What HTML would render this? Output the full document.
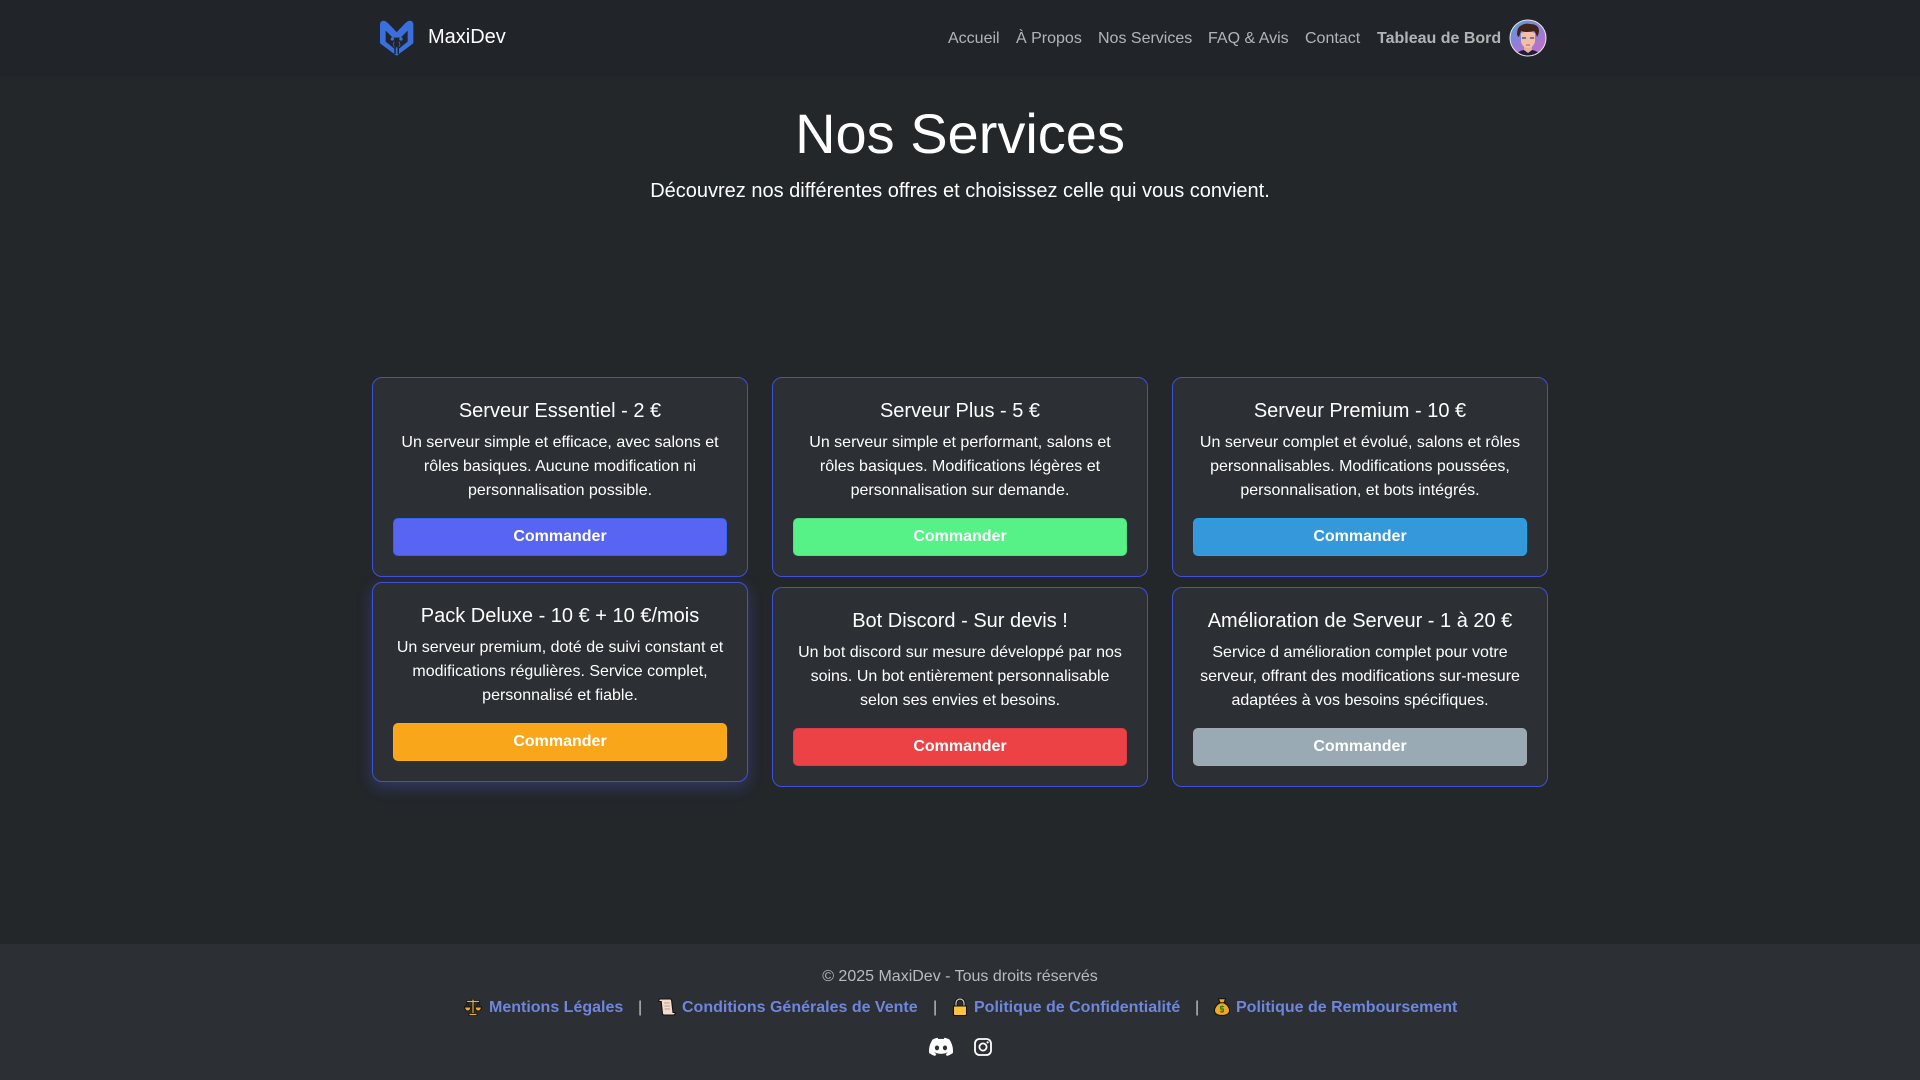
<!DOCTYPE html>
<html lang="fr"><head><meta charset="utf-8"><title>Nos Services - MaxiDev</title>
<style>
*{box-sizing:border-box}
html,body{margin:0;padding:0;width:1920px;height:1080px;overflow:hidden;background:#23272a;font-family:"Liberation Sans",sans-serif;color:#fff}
.abs{position:absolute;white-space:nowrap}
nav{position:absolute;left:0;top:0;width:1920px;height:76px;background:#212529}
nav a{position:absolute;top:27px;font-size:16px;line-height:24px;color:rgba(255,255,255,.65);white-space:nowrap}
h1{position:absolute;left:0;width:1920px;top:100px;margin:0;text-align:center;font-size:56px;line-height:67px;font-weight:400}
.sub{position:absolute;left:0;width:1920px;top:179px;margin:0;text-align:center;font-size:20px;line-height:24px}
.card{position:absolute;width:376px;height:200px;background:#2c2f33;border:1px solid #4050d8;border-radius:10px;padding:20px;text-align:center}
.card h5{margin:1px 0 8px;font-size:20px;line-height:24px;font-weight:400}
.card p{margin:0 0 15px;font-size:16px;line-height:24px}
.btn{display:block;height:38px;border-radius:5px;border:1px solid;font-weight:700;font-size:16px;line-height:36px;text-align:center;color:#fff}
.hov{box-shadow:0 5px 15px rgba(88,101,242,.3)}
footer{position:absolute;left:0;top:944px;width:1920px;height:136px;background:#2c2f33}
footer a{font-weight:700;color:#6e86dd}
.f{position:absolute;font-size:16px;line-height:24px;white-space:nowrap}
.sep{color:#c8c8c8}
</style></head><body>
<nav>
<svg class="abs" style="left:370px;top:10px" width="60" height="50" viewBox="0 0 180 150"><path d="M34 44q0-10 10-7q4 2 8 6L80 72L108 43q4-4 8-6q10-3 10 7V98L80 132L34 98Z" fill="#3a6fdc" stroke="#3a6fdc" stroke-width="8" stroke-linejoin="round"/><path d="M47 62L68 83H92L113 62V95L87 116V132H73V116L47 95Z" fill="#212529"/><circle cx="67" cy="87" r="5" fill="#3a6fdc"/><circle cx="93" cy="87" r="5" fill="#3a6fdc"/><path d="M80 112V136" stroke="#3a6fdc" stroke-width="5"/><path d="M74 96q-3 0-3 4t-2 3q2 0 2 3t3 4M86 96q3 0 3 4t2 3q-2 0-2 3t-3 4" fill="none" stroke="#3a6fdc" stroke-width="2"/></svg>
<div class="abs" style="left:428px;top:25px;font-size:20px;line-height:24px;color:#fff">MaxiDev</div>
<a style="left:948px">Accueil</a>
<a style="left:1016px">À Propos</a>
<a style="left:1098px">Nos Services</a>
<a style="left:1208px">FAQ &amp; Avis</a>
<a style="left:1305px">Contact</a>
<a style="left:1377px;font-weight:700">Tableau de Bord</a>
<svg class="abs" style="left:1509px;top:19px" width="38" height="38" viewBox="0 0 38 38"><defs><linearGradient id="g" x1="0" y1="0" x2=".6" y2="1"><stop offset="0" stop-color="#4f9fd8"/><stop offset=".55" stop-color="#8f7fd8"/><stop offset="1" stop-color="#c070c8"/></linearGradient><clipPath id="c"><circle cx="19" cy="19" r="17.5"/></clipPath></defs><circle cx="19" cy="19" r="18" fill="url(#g)" stroke="#e8e8e8" stroke-width="1"/><g clip-path="url(#c)"><path d="M6 38q2-6 9-7h8q7 1 9 7Z" fill="#1f1b3a"/><path d="M15 26h8v5l-4 3-4-3Z" fill="#eab09a"/><path d="M12 14q7-3 14 0v9q-2 6-7 6t-7-6Z" fill="#f2c0a8"/><path d="M8 15q0-7 5-9 4-2 8-1 8 0 9 6 0 4-2 7-1-4-3-6-7 2-13 0-1 3-2 6-2-1-2-3Z" fill="#3e2418"/><path d="M13 19h4M21 19h4" stroke="#557" stroke-width="1.6"/><path d="M17 26h4" stroke="#b56" stroke-width="1"/></g></svg>
</nav>
<h1>Nos Services</h1>
<p class="sub">Découvrez nos différentes offres et choisissez celle qui vous convient.</p>

<div class="card" style="left:372px;top:377px"><h5>Serveur Essentiel - 2 €</h5><p>Un serveur simple et efficace, avec salons et rôles basiques. Aucune modification ni personnalisation possible.</p><a class="btn" style="background:#5865f2;border-color:#2f66f2">Commander</a></div>
<div class="card" style="left:772px;top:377px"><h5>Serveur Plus - 5 €</h5><p>Un serveur simple et performant, salons et rôles basiques. Modifications légères et personnalisation sur demande.</p><a class="btn" style="background:#57f287;border-color:#4fe080">Commander</a></div>
<div class="card" style="left:1172px;top:377px"><h5>Serveur Premium - 10 €</h5><p>Un serveur complet et évolué, salons et rôles personnalisables. Modifications poussées, personnalisation, et bots intégrés.</p><a class="btn" style="background:#3498db;border-color:#22a8e8">Commander</a></div>
<div class="card hov" style="left:372px;top:582px"><h5>Pack Deluxe - 10 € + 10 €/mois</h5><p>Un serveur premium, doté de suivi constant et modifications régulières. Service complet, personnalisé et fiable.</p><a class="btn" style="background:#faa61a;border-color:#fbb010">Commander</a></div>
<div class="card" style="left:772px;top:587px"><h5>Bot Discord - Sur devis !</h5><p>Un bot discord sur mesure développé par nos soins. Un bot entièrement personnalisable selon ses envies et besoins.</p><a class="btn" style="background:#ed4245;border-color:#e03c45">Commander</a></div>
<div class="card" style="left:1172px;top:587px"><h5>Amélioration de Serveur - 1 à 20 €</h5><p>Service d amélioration complet pour votre serveur, offrant des modifications sur-mesure adaptées à vos besoins spécifiques.</p><a class="btn" style="background:#99aab5;border-color:#a0aab0">Commander</a></div>

<footer>
<div class="f" style="left:0;width:1920px;top:21px;text-align:center;color:#b9bbbe">© 2025 MaxiDev - Tous droits réservés</div>
<svg class="abs" style="left:464px;top:54px" width="18" height="18" viewBox="0 0 18 18"><path d="M9 1V15M4.500 16.500H13.500M2.500 3.500H15.500" stroke="#111" stroke-width="2.800" fill="none"/><path d="M9 1.500V15M5.500 16.500H12.500M3 3.500H15" stroke="#e8b040" stroke-width="1.200" fill="none"/><path d="M.5 9H7Q6.500 13 3.750 13Q1 13 .5 9ZM11 9H17.500Q17 13 14.250 13Q11.500 13 11 9Z" fill="#f5a623" stroke="#111" stroke-width="1"/><path d="M3.500 4L1.500 9M3.500 4L5.500 9M14.500 4L12.500 9M14.500 4L16.500 9" stroke="#111" stroke-width=".8"/></svg>
<a class="f" style="left:489px;top:52px">Mentions Légales</a>
<span class="f sep" style="left:638px;top:52px">|</span>
<svg class="abs" style="left:658px;top:54px" width="18" height="18" viewBox="0 0 18 18"><path d="M.8 1H12.500Q13.500 1 13.700 3L15 14.500H17.300Q17.300 17 15 17H6Q4.600 17 4.400 15L3.200 3.500H.8Q.8 1 2 1Z" fill="#f3dccb" stroke="#111" stroke-width="1.100"/><path d="M6 5H11.500M6.300 8H11.800M6.600 11H12" stroke="#b8a090" stroke-width=".9"/></svg>
<a class="f" style="left:682px;top:52px">Conditions Générales de Vente</a>
<span class="f sep" style="left:933px;top:52px">|</span>
<svg class="abs" style="left:952px;top:54px" width="16" height="18" viewBox="0 0 16 18"><path d="M4 9V5a4 4 0 0 1 8 0V9" fill="none" stroke="#111" stroke-width="3"/><path d="M4 9V5a4 4 0 0 1 8 0V9" fill="none" stroke="#ccc" stroke-width="1.200"/><rect x="1.500" y="8" width="13" height="9.500" rx="1.200" fill="#fdc33c" stroke="#111" stroke-width="1"/></svg>
<a class="f" style="left:974px;top:52px">Politique de Confidentialité</a>
<span class="f sep" style="left:1195px;top:52px">|</span>
<svg class="abs" style="left:1214px;top:54px" width="16" height="18" viewBox="0 0 16 18"><path d="M4.500 .8H11.500L10 4.800Q15.500 8 15.500 12.500Q15.500 17.400 8 17.400Q.5 17.400 .5 12.500Q.5 8 6 4.800Z" fill="#f5a623" stroke="#111" stroke-width="1"/><path d="M6 4.800H10" stroke="#111" stroke-width="1"/><path d="M10 8.500H6.500V11H9.500V13.800H6M8 7.500V15" fill="none" stroke="#1a8a1a" stroke-width="1"/></svg>
<a class="f" style="left:1236px;top:52px">Politique de Remboursement</a>
<svg class="abs" style="left:929px;top:93px" width="24" height="20" viewBox="0 0 24 18.500"><path d="M20.300 1.600A19.800 19.800 0 0 0 15.400 0c-.2.400-.5.900-.6 1.300a18.300 18.300 0 0 0-5.500 0C9.100.9 8.800.4 8.600 0A19.700 19.700 0 0 0 3.700 1.600C.6 6.200-.3 10.800.1 15.200a19.900 19.900 0 0 0 6 3c.5-.7.900-1.400 1.300-2.100-.7-.3-1.400-.6-2-1l.5-.4a14.200 14.200 0 0 0 12.200 0l.5.400c-.6.400-1.300.7-2 1 .4.700.8 1.400 1.300 2.100a19.800 19.800 0 0 0 6-3c.5-5.100-.8-9.600-3.600-13.600ZM8 12.500c-1.200 0-2.100-1.100-2.100-2.400S6.800 7.700 8 7.700s2.200 1.100 2.100 2.400c0 1.300-.9 2.400-2.100 2.400Zm8 0c-1.200 0-2.100-1.100-2.100-2.400s.9-2.400 2.100-2.400 2.200 1.100 2.100 2.400c0 1.300-.9 2.400-2.100 2.400Z" fill="#fff"/></svg>
<svg class="abs" style="left:974px;top:94px" width="18" height="18" viewBox="0 0 18 18"><rect x="1" y="1" width="16" height="16" rx="4.500" fill="none" stroke="#fff" stroke-width="1.800"/><circle cx="9" cy="9" r="3.600" fill="none" stroke="#fff" stroke-width="1.800"/><circle cx="13.600" cy="4.400" r="1.100" fill="#fff"/></svg>
</footer>
</body></html>
